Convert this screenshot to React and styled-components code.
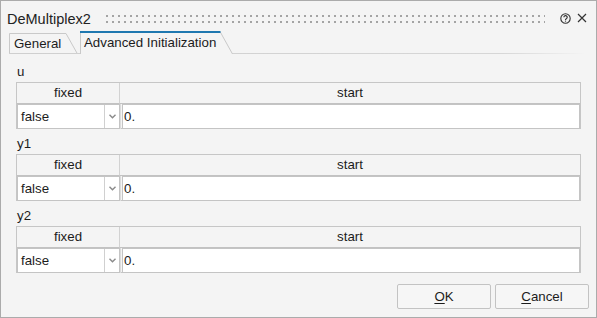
import React from "react";
import styled, { createGlobalStyle } from "styled-components";

const Global = createGlobalStyle`
  html, body { margin: 0; padding: 0; background: #f4f4f4; }
  * { box-sizing: border-box; }
  body { font-family: "Liberation Sans", Arial, sans-serif; color: #1c1c1c; }
`;

const Window = styled.div`
  width: 597px;
  height: 318px;
  border: 1px solid #ababab;
  background: #f4f4f4;
  display: flex;
  flex-direction: column;
  overflow: hidden;
`;

const TitleBar = styled.div`
  height: 30px;
  padding: 6px 0 0 6px;
  display: flex;
  align-items: flex-start;
`;

const TitleRow = styled.div`
  height: 24px;
  flex: 1;
  display: flex;
  align-items: center;
`;

const Title = styled.div`
  font-size: 14.5px;
  color: #222;
  line-height: 24px;
`;

const Grip = styled.div`
  flex: 1;
  height: 8px;
  margin: 0 12px 0 15px;
  background: repeating-linear-gradient(90deg, #a4a4a4 0 2px, transparent 2px 6px);
  -webkit-mask: repeating-linear-gradient(180deg, #000 0 2px, transparent 2px 6px);
  mask: repeating-linear-gradient(180deg, #000 0 2px, transparent 2px 6px);
`;

const IconBtn = styled.div`
  width: 16px;
  height: 16px;
  display: flex;
  align-items: center;
  justify-content: center;
  margin-right: ${(p) => p.$mr || 0}px;
  margin-top: -2px;
`;

const TabBar = styled.div`
  position: relative;
  height: 23px;
  padding-left: 8px;
  display: flex;
  align-items: flex-end;
  &::after {
    content: "";
    position: absolute;
    left: 8px;
    right: 10px;
    bottom: 0;
    height: 1px;
    background: linear-gradient(90deg, #cfcfcf 0%, #d6d6d6 85%, rgba(220,220,220,0) 100%);
    z-index: 1;
  }
`;

const Tab = styled.div`
  position: relative;
  width: ${(p) => p.$w}px;
  height: ${(p) => p.$h}px;
  margin-right: ${(p) => p.$mr || 0}px;
  padding-left: ${(p) => p.$pl}px;
  font-size: 13.3px;
  line-height: ${(p) => p.$h}px;
  color: #1c1c1c;
  z-index: ${(p) => (p.$active ? 2 : 0)};
  span { position: relative; }
`;

const TabShape = styled.svg`
  position: absolute;
  left: 0;
  top: 0;
  overflow: visible;
`;

function TabItem({ w, h, pl, mr, active, children }) {
  const slant = active ? 13 : 12;
  return (
    <Tab $w={w} $h={h} $pl={pl} $mr={mr} $active={active}>
      <TabShape width={w} height={h}>
        <path
          d={`M0.5 ${h} L0.5 0.5 L${w - slant} 0.5 L${w - 0.5} ${h} Z`}
          fill="#f4f4f4"
          stroke="none"
        />
        <path
          d={`M0.5 ${h} L0.5 0.5 L${w - slant} 0.5 L${w - 0.5} ${h}`}
          fill="none"
          stroke="#c9c9c9"
          strokeWidth="1"
        />
        {active && (
          <path d={`M0 1 L${w - slant + 0.5} 1`} stroke="#1f78b0" strokeWidth="2" />
        )}
      </TabShape>
      <span>{children}</span>
    </Tab>
  );
}

const Content = styled.div`
  padding: 8px 15px 0 15px;
  display: flex;
  flex-direction: column;
  gap: 5px;
`;

const Section = styled.div`
  display: flex;
  flex-direction: column;
`;

const Label = styled.div`
  height: 20px;
  line-height: 20px;
  font-size: 13.3px;
  padding-left: 1px;
  color: #1c1c1c;
`;

const Table = styled.div`
  display: grid;
  grid-template-columns: 103px 1fr;
  grid-template-rows: 21px 25px;
  border: 1px solid #c6c6c6;
  height: 47px;
`;

const HeadCell = styled.div`
  background: #f4f4f4;
  border-right: ${(p) => (p.$last ? "none" : "1px solid #d2d2d2")};
  border-bottom: 1px solid #c2c2c2;
  font-size: 13.3px;
  line-height: 20px;
  text-align: center;
  color: #1c1c1c;
`;

const DataCell = styled.div`
  display: flex;
  padding-left: ${(p) => (p.$last ? 1 : 0)}px;
  border-left: ${(p) => (p.$last ? "1px solid #dcdcdc" : "none")};
`;

const Field = styled.div`
  flex: 1;
  display: flex;
  align-items: center;
  background: #fff;
  border: 1px solid #c4c4c4;
  font-size: 13.3px;
  color: #1c1c1c;
  padding-left: ${(p) => (p.$tight ? 1 : 3)}px;
`;

const SelectText = styled.div`
  flex: 1;
`;

const Arrow = styled.div`
  width: 15px;
  align-self: stretch;
  border-left: 1px solid #d0d0d0;
  display: flex;
  align-items: center;
  justify-content: center;
`;

const Footer = styled.div`
  margin-top: 11px;
  padding-right: 7px;
  display: flex;
  justify-content: flex-end;
  gap: 4px;
`;

const Button = styled.button`
  width: 94px;
  height: 25px;
  border: 1px solid #c3c3c3;
  border-radius: 2px;
  background: #f6f6f6;
  font-family: "Liberation Sans", Arial, sans-serif;
  font-size: 13.3px;
  color: #1c1c1c;
  padding: 0;
  u { text-decoration: underline; text-underline-offset: 2px; }
`;

function Param({ name }) {
  return (
    <Section>
      <Label>{name}</Label>
      <Table>
        <HeadCell>fixed</HeadCell>
        <HeadCell $last>start</HeadCell>
        <DataCell>
          <Field>
            <SelectText>false</SelectText>
            <Arrow>
              <svg width="7" height="5" viewBox="0 0 7 5">
                <path d="M0.5 0.8 L3.5 3.8 L6.5 0.8" fill="none" stroke="#8a8a8a" strokeWidth="1.4" />
              </svg>
            </Arrow>
          </Field>
        </DataCell>
        <DataCell $last>
          <Field $tight>0.</Field>
        </DataCell>
      </Table>
    </Section>
  );
}

export default function App() {
  return (
    <>
      <Global />
      <Window>
        <TitleBar>
          <TitleRow>
            <Title>DeMultiplex2</Title>
            <Grip />
            <IconBtn $mr={1}>
              <svg width="11" height="11" viewBox="0 0 11 11">
                <circle cx="5.5" cy="5.5" r="4.7" fill="none" stroke="#333" strokeWidth="1.1" />
                <path d="M3.9 4.3 a1.65 1.65 0 1 1 2.4 1.45 c-0.55 0.3 -0.8 0.6 -0.8 1.2" fill="none" stroke="#333" strokeWidth="1.2" />
                <circle cx="5.5" cy="8.1" r="0.7" fill="#333" />
              </svg>
            </IconBtn>
            <IconBtn $mr={6}>
              <svg width="10" height="10" viewBox="0 0 10 10">
                <path d="M1 1 L9 9 M9 1 L1 9" stroke="#333" strokeWidth="1.2" />
              </svg>
            </IconBtn>
          </TitleRow>
        </TitleBar>
        <TabBar>
          <TabItem w={69} h={21} pl={5} mr={2}>General</TabItem>
          <TabItem w={153} h={23} pl={4} active>Advanced Initialization</TabItem>
        </TabBar>
        <Content>
          <Param name="u" />
          <Param name="y1" />
          <Param name="y2" />
        </Content>
        <Footer>
          <Button><u>O</u>K</Button>
          <Button><u>C</u>ancel</Button>
        </Footer>
      </Window>
    </>
  );
}
